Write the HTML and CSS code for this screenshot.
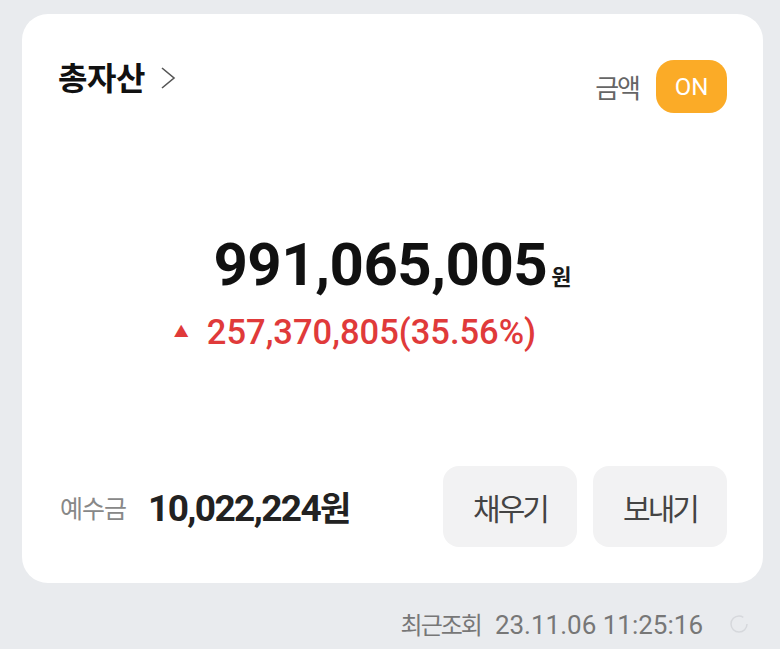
FILE: index.html
```html
<!DOCTYPE html>
<html lang="ko">
<head>
<meta charset="utf-8">
<link rel="stylesheet" href="styles.css">
</head>
<body>
<div class="page">
  <section class="card">
    <header class="head">
      <div class="title">총자산 <svg class="chev" width="16" height="22" viewBox="0 0 16 22"><path d="M2 1 L14 11 L2 21" fill="none" stroke="#555" stroke-width="1.6"/></svg></div>
      <div class="toggle-wrap">
        <span class="toggle-label">금액</span>
        <span class="toggle">ON</span>
      </div>
    </header>
    <div class="main">
      <div class="total"><span class="num">991,065,005</span><span class="won">원</span></div>
      <div class="change"><span class="tri">▲</span>257,370,805(35.56%)</div>
    </div>
    <div class="bottom">
      <div class="deposit">
        <span class="dep-label">예수금</span>
        <span class="dep-value">10,022,224<span class="dep-won">원</span></span>
      </div>
      <div class="actions">
        <button class="btn">채우기</button>
        <button class="btn">보내기</button>
      </div>
    </div>
  </section>
  <footer class="foot">
    <span class="foot-text"><span class="foot-ko">최근조회</span>23.11.06 11:25:16</span>
    <svg class="spin" width="18" height="18" viewBox="0 0 18 18"><circle cx="9" cy="9" r="8" fill="none" stroke="#d6d8dc" stroke-width="1.5" stroke-dasharray="42 8"/></svg>
  </footer>
</div>
</body>
</html>
```
FILE: styles.css
```css
* { box-sizing: border-box; }
html, body { margin: 0; padding: 0; }
body {
  background: #e9ebee;
  font-family: Roboto, "Noto Sans CJK KR", sans-serif;
  color: #1a1a1a;
  width: 780px;
  height: 649px;
  overflow: hidden;
}
.page { padding: 14px 17px 0 22px; }
.card {
  background: #fff;
  border-radius: 26px;
  height: 569px;
  padding: 46px 36px 36px 36px;
  display: flex;
  flex-direction: column;
}
.head {
  display: flex;
  justify-content: space-between;
  align-items: flex-start;
  height: 53px;
}
.title {
  font-family: "Noto Sans CJK KR", sans-serif;
  font-size: 32px;
  font-weight: 700;
  letter-spacing: -0.5px;
  line-height: 36px;
  display: flex;
  align-items: center;
  gap: 15px;
  color: #111;
  margin-top: -2px;
}
.chev { margin-top: 4px; }
.toggle-wrap { display: flex; align-items: center; gap: 17px; margin-top: 0; }
.toggle-label {
  font-family: "Noto Sans CJK KR", sans-serif;
  font-size: 26px;
  color: #666;
  letter-spacing: -2px;
}
.toggle {
  background: #fbab27;
  color: #fff;
  width: 71px;
  height: 53px;
  border-radius: 18px;
  display: flex;
  align-items: center;
  justify-content: center;
  font-size: 24px;
  font-family: Roboto, sans-serif;
}
.main {
  flex: 1;
  display: flex;
  flex-direction: column;
  align-items: center;
  padding-top: 117px;
}
.total { display: flex; align-items: baseline; }
.num {
  font-size: 60px;
  font-weight: 700;
  line-height: 70px;
  color: #111;
  letter-spacing: -0.5px;
}
.won {
  font-family: "Noto Sans CJK KR", sans-serif;
  font-size: 22px;
  font-weight: 700;
  margin-left: 4px;
}
.change {
  margin-top: 12px;
  margin-right: 75px;
  color: #e03a3a;
  font-size: 34.5px;
  font-weight: 500;
  line-height: 40px;
  display: flex;
  align-items: center;
}
.tri { font-size: 15px; margin-right: 18px; }
.bottom {
  display: flex;
  justify-content: space-between;
  align-items: center;
}
.deposit { display: flex; align-items: center; gap: 22px; padding-left: 2px; }
.dep-label {
  font-family: "Noto Sans CJK KR", sans-serif;
  font-size: 25px;
  color: #888;
  letter-spacing: -1px;
}
.dep-value {
  font-size: 37px;
  font-weight: 700;
  color: #222;
  letter-spacing: -1.6px;
}
.dep-won {
  font-family: "Noto Sans CJK KR", sans-serif;
  font-size: 34px;
  letter-spacing: 0;
}
.actions { display: flex; gap: 16px; }
.btn {
  border: none;
  background: #f2f2f3;
  border-radius: 16px;
  width: 134px;
  height: 81px;
  font-family: "Noto Sans CJK KR", sans-serif;
  font-size: 30px;
  color: #444;
  letter-spacing: -3px;
  padding: 0;
}
.foot {
  display: flex;
  justify-content: flex-end;
  align-items: center;
  padding: 23px 15px 0 0;
  gap: 27px;
}
.foot-text {
  font-family: Roboto, "Noto Sans CJK KR", sans-serif;
  font-size: 26px;
  color: #777;
  display: flex;
  align-items: baseline;
  gap: 14px;
}
.foot-ko {
  font-family: "Noto Sans CJK KR", sans-serif;
  font-size: 24px;
  letter-spacing: -2px;
}
```
